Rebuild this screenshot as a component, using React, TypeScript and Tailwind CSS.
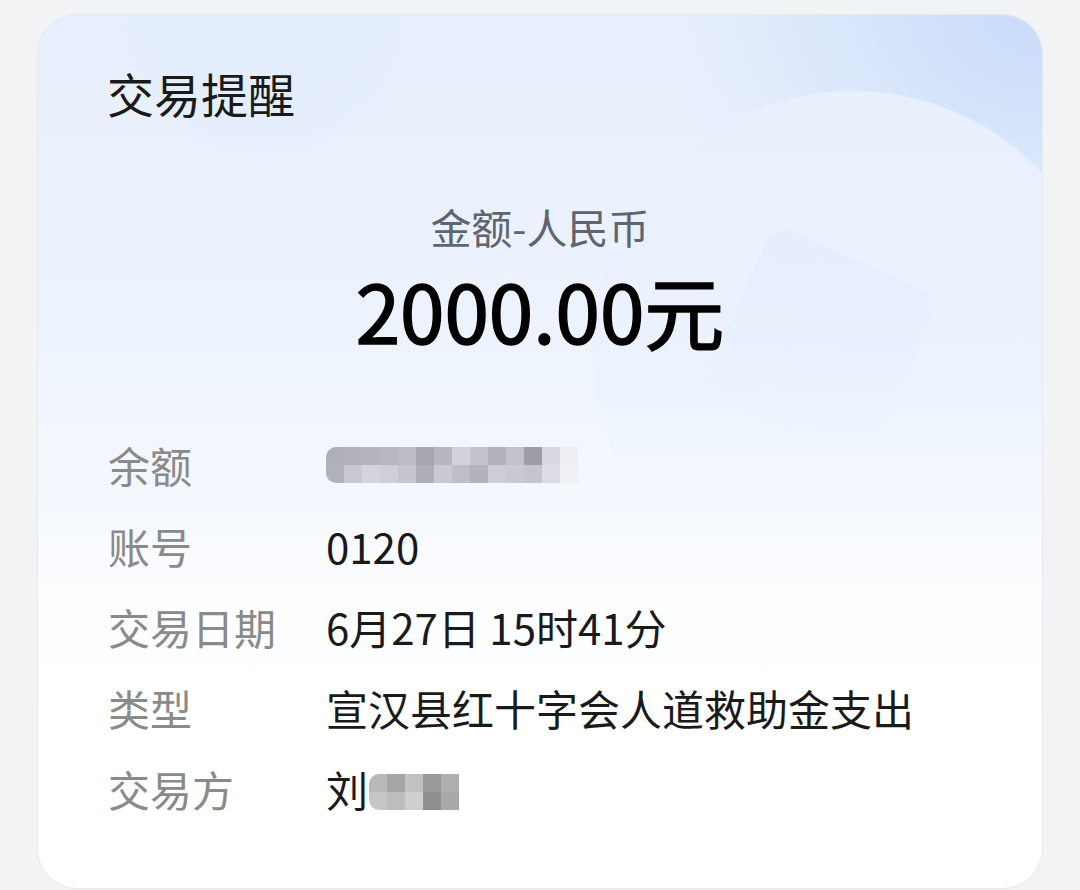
const font = 'font-["Noto_Sans_CJK_SC","Noto_Sans",sans-serif]';

const rows: { label: string; value?: string }[] = [
  { label: '余额' },
  { label: '账号', value: '0120' },
  { label: '交易日期', value: '6月27日 15时41分' },
  { label: '类型', value: '宣汉县红十字会人道救助金支出' },
  { label: '交易方' },
];

// mosaic over the masked balance, two rows of 18px cells
const balanceTop = ['#afafb7', '#b3b3bb', '#b5b5bd', '#b8b8c0', '#bdbdc5', '#a7a7af', '#b7b7bf', '#d2d2da', '#c4c4cc', '#b3b3bb', '#c2c2ca', '#9c9ca4', '#d8d8e0', '#eceef3'];
const balanceBottom = ['#b2b2ba', '#c9c9d1', '#d4d4dc', '#cfcfd7', '#c6c6ce', '#aeaeb6', '#c9c9d1', '#bebec6', '#b3b3bb', '#cdcdd5', '#c9c9d1', '#c5c5cd', '#dcdce4', '#eef0f4'];
const nameTop = ['#b9b9b9', '#a6a6a6', '#c1c1c1', '#999999', '#afafaf'];
const nameBottom = ['#c6c6c6', '#bdbdbd', '#cfcfcf', '#8f8f8f', '#a9a9a9'];

function Mosaic({ top, bottom, cell }: { top: string[]; bottom: string[]; cell: number }) {
  return (
    <div className="flex flex-col overflow-hidden rounded-l-[10px]">
      {[top, bottom].map((line, r) => (
        <div key={r} className="flex">
          {line.map((c, i) => (
            <span key={i} style={{ background: c, width: 18, height: cell }} />
          ))}
        </div>
      ))}
    </div>
  );
}

export default function App() {
  return (
    <div className={`${font} min-h-[890px] bg-[#f2f3f5] px-[37px] pt-[14px]`}>
      <div className="relative h-[875px] overflow-hidden rounded-[40px] border border-[#e6e8ec] bg-[linear-gradient(180deg,#e7effc_0%,#edf3fd_35%,#f4f8fe_55%,#fdfeff_68%,#ffffff_80%)]">
        <span aria-hidden className="pointer-events-none absolute inset-0 bg-[radial-gradient(45%_40%_at_100%_0%,#c8dbf9,transparent_80%)]" />
        <span aria-hidden className="pointer-events-none absolute left-[555px] top-[76px] h-[520px] w-[520px] rounded-full bg-[linear-gradient(180deg,#e8f0fc_0%,#ebf2fd_40%,rgba(240,246,254,0)_75%)]" />
        <span aria-hidden className="pointer-events-none absolute left-[80px] top-[-150px] h-[290px] w-[290px] rounded-full bg-[radial-gradient(circle,rgba(222,234,251,0.55),rgba(226,236,251,0.35)_68%,transparent_71%)]" />
        <span aria-hidden className="pointer-events-none absolute left-[690px] top-[236px] h-[185px] w-[185px] rotate-[24deg] rounded-[26px] border border-white/25 bg-[linear-gradient(160deg,rgba(214,228,250,0.22),rgba(240,246,254,0.05))]" />

        <div className="relative">
          <h1 className="ml-[69px] mt-[54px] text-[47px] font-normal leading-none text-[#1a1a1a]">交易提醒</h1>

          <div className="mt-[90px] text-center text-[41px] leading-none text-[#5d6571]">金额-人民币</div>
          <div className="mt-[22px] text-center text-[80px] font-normal leading-none text-black [-webkit-text-stroke:1.6px_black]">2000.00元</div>

          <div className="mt-[75px] flex flex-col">
            {rows.map((r, i) => (
              <div key={r.label} className="flex h-[81px] items-center pl-[70px]">
                <span className="w-[218px] text-[42px] leading-none text-[#8a8a8a]">{r.label}</span>
                {i === 0 && <Mosaic top={balanceTop} bottom={balanceBottom} cell={18} />}
                {i === 4 && (
                  <div className="flex items-center">
                    <span className="text-[42px] leading-none text-[#1a1a1a]">刘</span>
                    <div className="ml-[1px] mt-[6px]">
                      <Mosaic top={nameTop} bottom={nameBottom} cell={18} />
                    </div>
                  </div>
                )}
                {r.value && <span className="text-[42px] leading-none text-[#1a1a1a]">{r.value}</span>}
              </div>
            ))}
          </div>
        </div>
      </div>
    </div>
  );
}
